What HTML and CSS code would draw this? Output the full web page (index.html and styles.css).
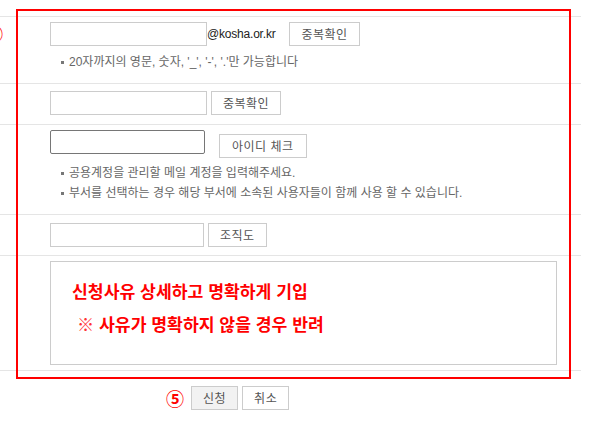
FILE: index.html
```html
<!DOCTYPE html>
<html lang="ko">

<head>
    <meta charset="UTF-8">
    <title>공용계정 신청</title>
    <link rel="stylesheet" href="styles.css">
</head>

<body>
    <div class="page">
        <div class="form">
            <div class="row row-id">
                <div class="label"><span class="mark">④</span></div>
                <div class="field">
                    <div class="line">
                        <input type="text" class="text w157">
                        <span class="domain">@kosha.or.kr</span>
                        <button class="btn btn-dup">중복확인</button>
                    </div>
                    <ul class="notes">
                        <li>20자까지의 영문, 숫자, '_', '-', '.'만 가능합니다</li>
                    </ul>
                </div>
            </div>

            <div class="row row-name">
                <div class="label"></div>
                <div class="field">
                    <div class="line">
                        <input type="text" class="text w157">
                        <button class="btn btn-near">중복확인</button>
                    </div>
                </div>
            </div>

            <div class="row row-manager">
                <div class="label"></div>
                <div class="field">
                    <div class="line line-top">
                        <input type="text" class="text text-dark w155">
                        <button class="btn btn-check">아이디 체크</button>
                    </div>
                    <ul class="notes notes-tall">
                        <li>공용계정을 관리할 메일 계정을 입력해주세요.</li>
                        <li>부서를 선택하는 경우 해당 부서에 소속된 사용자들이 함께 사용 할 수 있습니다.</li>
                    </ul>
                </div>
            </div>

            <div class="row row-dept">
                <div class="label"></div>
                <div class="field">
                    <div class="line">
                        <input type="text" class="text w154">
                        <button class="btn btn-near">조직도</button>
                    </div>
                </div>
            </div>

            <div class="row row-reason">
                <div class="label"></div>
                <div class="field">
                    <div class="reason">
                        <p class="reason-main">신청사유 상세하고 명확하게 기입</p>
                        <p class="reason-warn"><span class="ref">※</span> 사유가 명확하지 않을 경우 반려</p>
                    </div>
                </div>
            </div>
        </div>

        <div class="actions">
            <span class="mark mark-inline">⑤</span>
            <button class="btn btn-submit">신청</button>
            <button class="btn btn-cancel">취소</button>
        </div>

        <!-- annotation frame over the form -->
        <div class="highlight"></div>
    </div>
</body>

</html>
```

FILE: styles.css
```css
body {
    margin: 0;
    background-color: #ffffff;
    font-family: "Noto Sans CJK KR", "Noto Sans", sans-serif;
    color: #555555;
}

.page {
    position: relative;
    width: 599px;
    height: 429px;
    overflow: hidden;
}

.form {
    width: 581px;
    padding-top: 16px;
}

.row {
    display: flex;
    border-bottom: 1px solid #e5e5e5;
}

.row-id {
    border-top: 1px solid #e5e5e5;
    padding: 5px 0 12px;
}

.row-name {
    padding: 7px 0 9px;
}

.row-manager {
    padding: 5px 0 11px;
}

.row-dept {
    padding: 8px 0 8px;
}

.row-reason {
    padding: 5px 0 5px;
}

.label {
    width: 50px;
    flex-shrink: 0;
}

.field {
    flex: 1;
}

.line {
    display: flex;
    align-items: center;
    height: 24px;
}

.line-top {
    align-items: flex-start;
    height: 28px;
}

.text {
    box-sizing: border-box;
    height: 24px;
    margin: 0;
    padding: 0 4px;
    border: 1px solid #cccccc;
    border-radius: 0;
    background-color: #ffffff;
    font-family: inherit;
    font-size: 12px;
    outline: none;
}

.text-dark {
    border-color: #767676;
    border-radius: 2px;
}

.w157 {
    width: 157px;
}

.w155 {
    width: 155px;
}

.w154 {
    width: 154px;
}

.domain {
    font-family: "Liberation Sans", Arial, sans-serif;
    font-size: 12px;
    color: #222222;
    letter-spacing: -0.2px;
}

.btn {
    box-sizing: border-box;
    height: 24px;
    margin: 0;
    padding: 0 11px;
    border: 1px solid #cccccc;
    background-color: #ffffff;
    color: #555555;
    font-family: "Noto Sans CJK KR", sans-serif;
    font-size: 12px;
    letter-spacing: 0.5px;
    line-height: 22px;
    cursor: pointer;
}

.btn-dup {
    margin-left: 14px;
}

.btn-near {
    margin-left: 4px;
}

.btn-check {
    margin-left: 14px;
    margin-top: 4px;
    padding: 0 12px;
}

.notes {
    list-style: none;
    margin: 7px 0 0;
    padding: 0;
    font-family: "Liberation Sans", "Noto Sans CJK KR", sans-serif;
    font-size: 12px;
    line-height: 18px;
    color: #666666;
}

.notes-tall {
    margin-top: 5px;
    line-height: 20px;
}

.notes li {
    display: flex;
    align-items: center;
}

.notes li::before {
    content: "";
    width: 3px;
    height: 3px;
    margin: 0 5px 0 11px;
    background-color: #777777;
    flex-shrink: 0;
}

.reason {
    box-sizing: border-box;
    width: 507px;
    height: 104px;
    padding: 12px 20px 0 21px;
    border: 1px solid #cccccc;
}

.reason p {
    margin: 0;
    font-size: 17.2px;
    font-weight: bold;
    line-height: 33px;
    color: #ff0000;
    white-space: nowrap;
}

.reason-warn {
    padding-left: 5px;
}

.ref {
    font-weight: normal;
    color: #ff3333;
}

.mark {
    display: inline-block;
    color: #ff0000;
    font-size: 18px;
    line-height: 18px;
    font-weight: bold;
}

.row-id .mark {
    margin-left: -15px;
    margin-top: 1px;
}

.actions {
    display: flex;
    align-items: center;
    padding: 15px 0 0 166px;
}

.mark-inline {
    margin-right: 7px;
}

.btn-submit {
    background-color: #f2f2f2;
}

.btn-cancel {
    margin-left: 4px;
}

.highlight {
    position: absolute;
    left: 16px;
    top: 9px;
    width: 555px;
    height: 370px;
    box-sizing: border-box;
    border: 2px solid #ff0000;
    pointer-events: none;
}
```
